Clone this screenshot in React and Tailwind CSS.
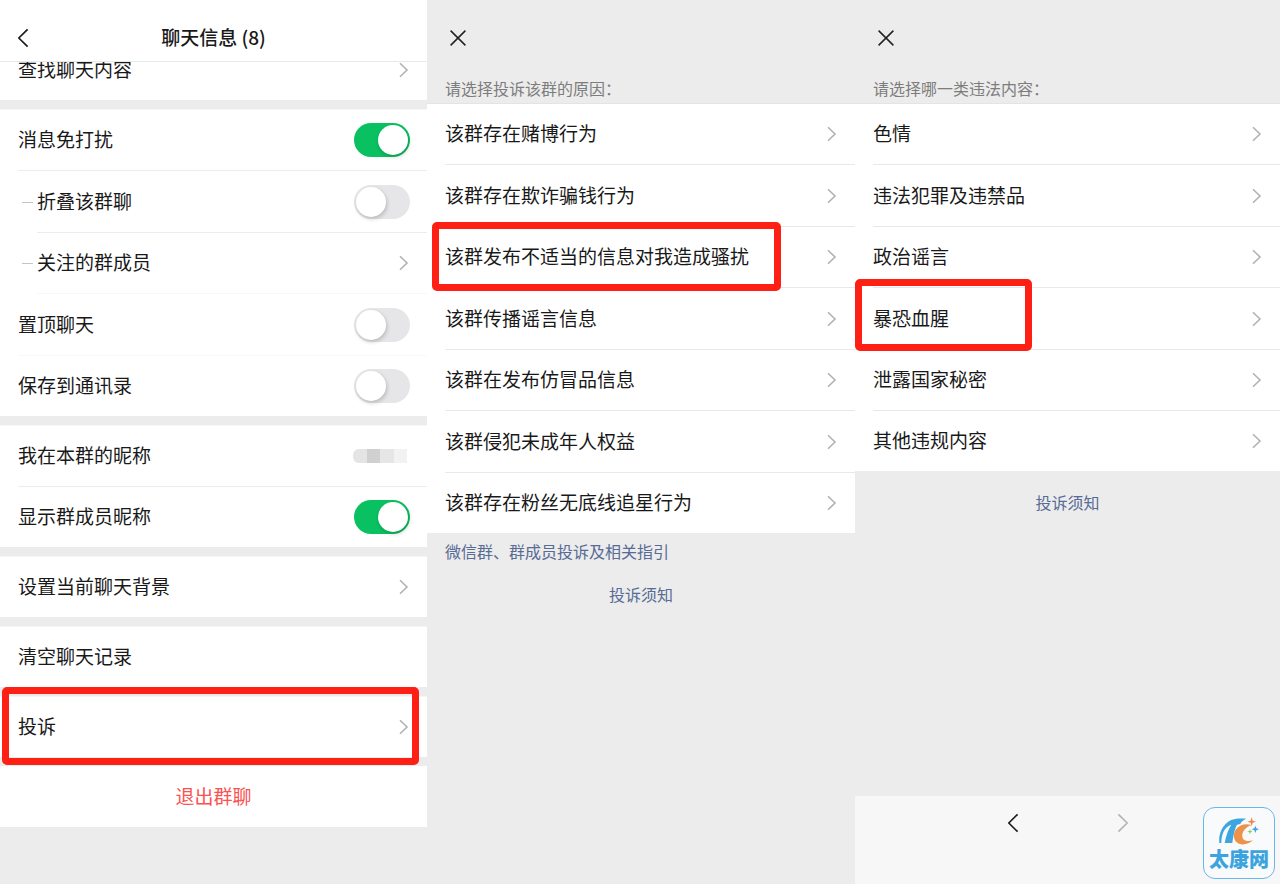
import React from "react";

function Chevron({ className = "text-[#b2b2b2]" }) {
  return (
    <svg viewBox="0 0 12 16" fill="none" stroke="currentColor" strokeWidth="1.6" className={`h-4 w-3 shrink-0 ${className}`} aria-hidden="true">
      <path d="M2 1.2 9 8l-7 6.8" />
    </svg>
  );
}

function NavArrow({ flip, className }) {
  return (
    <svg viewBox="0 0 12 20" fill="none" stroke="currentColor" strokeWidth="1.7" strokeLinejoin="round" className={`h-5 w-3 ${className}`} aria-hidden="true">
      <path d={flip ? "M1.4 1.3 10.2 10l-8.8 8.7" : "M10.6 1.3 1.8 10l8.8 8.7"} />
    </svg>
  );
}

function Highlight({ className }) {
  return <span aria-hidden="true" className={`pointer-events-none absolute z-10 rounded-[5px] border-[7px] border-[#ff2015] ${className}`} />;
}

function Row({ sub, line, highlight, children }) {
  return (
    <li className="relative flex h-[61px] items-center pl-[18px] not-last:even:h-[62px] last:h-[60px]">
      {sub && <span className="mx-1 h-px w-[11px] shrink-0 bg-[#c4c4c4]" />}
      <div className={`flex h-full min-w-0 flex-1 border-b ${line ? line : "border-transparent"}`}>{children}</div>
      {highlight && <Highlight className={highlight} />}
    </li>
  );
}

function LinkRow({ label, ...rest }) {
  return (
    <Row {...rest}>
      <button type="button" className="flex flex-1 items-center justify-between pr-[17px] text-left">
        <span className="pb-[2px]">{label}</span>
        <Chevron />
      </button>
    </Row>
  );
}

function ToggleRow({ label, on, ...rest }) {
  return (
    <Row {...rest}>
      <label className="flex flex-1 items-center justify-between pr-[17px]">
        <span className="pb-[2px]">{label}</span>
        <input
          type="checkbox"
          role="switch"
          defaultChecked={on}
          className="flex h-[34px] w-14 shrink-0 appearance-none items-center rounded-full bg-[#e6e6e9] px-[2px] before:size-[30px] before:rounded-full before:bg-white before:shadow-[1px_2px_4px_rgba(0,0,0,0.2)] checked:justify-end checked:bg-[#09c160]"
        />
      </label>
    </Row>
  );
}

function Group({ children }) {
  return <ul className="border-t border-[#f6f6f6] bg-white">{children}</ul>;
}

function ChatInfo() {
  const line = "border-[#ececec]";
  const faint = "border-[#f8f8f8]";
  return (
    <section className="flex flex-col">
      <header className="relative z-10 grid h-[62px] grid-cols-[1fr_auto_1fr] items-center border-b border-[#e9e9e9] bg-white px-[17px] pt-[14px]">
        <button type="button" aria-label="返回" className="w-3">
          <NavArrow className="text-[#1a1a1a]" />
        </button>
        <h1 className="pb-[2px] font-medium">聊天信息 (8)</h1>
      </header>
      <div className="-mt-[23px] flex flex-col gap-[9px]">
        <Group>
          <LinkRow label="查找聊天内容" />
        </Group>
        <Group>
          <ToggleRow label="消息免打扰" on line={line} />
          <ToggleRow label="折叠该群聊" sub line={line} />
          <LinkRow label="关注的群成员" sub line={faint} />
          <ToggleRow label="置顶聊天" line={faint} />
          <ToggleRow label="保存到通讯录" />
        </Group>
        <Group>
          <Row line={line}>
            <button type="button" className="flex flex-1 items-center justify-between pr-5 text-left">
              <span className="pb-[2px]">我在本群的昵称</span>
              <span className="flex h-[14px] w-[54px] overflow-hidden rounded-l-md">
                <span className="flex-1 bg-[#e4e4e4]" />
                <span className="flex-1 bg-[#d0d0d0]" />
                <span className="flex-1 bg-[#e6e6e6]" />
                <span className="flex-1 bg-[#f2f2f2]" />
              </span>
            </button>
          </Row>
          <ToggleRow label="显示群成员昵称" on />
        </Group>
        <Group>
          <LinkRow label="设置当前聊天背景" />
        </Group>
        <Group>
          <Row>
            <button type="button" className="flex flex-1 items-center text-left">
              <span className="pb-[2px]">清空聊天记录</span>
            </button>
          </Row>
        </Group>
        <Group>
          <LinkRow label="投诉" highlight="-top-[10px] -bottom-2 left-[2px] right-2" />
        </Group>
        <div className="bg-white">
          <button type="button" className="h-[61px] w-full pb-[2px] text-[#fa5151]">退出群聊</button>
        </div>
      </div>
    </section>
  );
}

function ReportPage({ prompt, options, marked, highlight, children }) {
  return (
    <section className="flex flex-col">
      <header className="flex h-[61px] items-center px-[23px] pt-[14px]">
        <button type="button" aria-label="关闭">
          <svg viewBox="0 0 16 16" fill="none" stroke="#222" strokeWidth="1.5" className="size-4" aria-hidden="true">
            <path d="M.6.6 15.4 15.4M15.4.6.6 15.4" />
          </svg>
        </button>
      </header>
      <h2 className="flex h-[42px] items-center px-[18px] pt-3 text-base leading-5 text-[#7d7d7d]">{prompt}</h2>
      <ul className="border-t border-[#e4e4e4] bg-white">
        {options.map((label, i) => (
          <LinkRow
            key={label}
            label={label}
            line={i < options.length - 1 ? "border-[#e8e8e8]" : undefined}
            highlight={i === marked ? highlight : undefined}
          />
        ))}
      </ul>
      {children}
    </section>
  );
}

function SiteBadge() {
  return (
    <div className="absolute right-[5px] bottom-[5px] flex size-18 flex-col items-center rounded-xl border border-[#68b7e6] bg-[#f8fafb] pt-2">
      <svg viewBox="84 58 126 90" className="h-[30px] w-[42px] shrink-0" aria-hidden="true">
        <path fill="#3da5df" d="M88 139C85 110 98 84 122 71c14-7 30-6 47-5-9 4-15 8-18 16l-10 2c-7 12-11 33-14 55h-23c4-21 10-40 20-55-20 6-30 28-30 55z" />
        <path fill="#ee924a" d="M185 86c-14-7-37-3-47 12-10 14-8 34 5 41 13 8 32 5 46-8-15 4-30 2-32-11-2-15 12-31 28-34z" />
        <path fill="#f08449" d="m185 61 3 11 10 3-10 3-3 11-3-11-10-3 10-3z" />
        <path fill="#3da5df" d="m196 87 3 8 8 3-8 3-3 8-3-8-8-3 8-3z" />
        <path fill="#86c850" d="m180 97 2 6 6 2-6 2-2 6-2-6-6-2 6-2z" />
      </svg>
      <span className="text-xl leading-[26px] font-black whitespace-nowrap text-[#3ba4df]">太康网</span>
    </div>
  );
}

const reasons = [
  "该群存在赌博行为",
  "该群存在欺诈骗钱行为",
  "该群发布不适当的信息对我造成骚扰",
  "该群传播谣言信息",
  "该群在发布仿冒品信息",
  "该群侵犯未成年人权益",
  "该群存在粉丝无底线追星行为",
];

const categories = ["色情", "违法犯罪及违禁品", "政治谣言", "暴恐血腥", "泄露国家秘密", "其他违规内容"];

export default function App() {
  return (
    <main className="relative grid min-h-screen grid-cols-[427fr_428fr_425fr] bg-[#ececec] font-['Noto_Sans_CJK_SC',sans-serif] text-[19px] leading-7 text-[#191919]">
      <ChatInfo />
      <ReportPage
        prompt="请选择投诉该群的原因："
        options={reasons}
        marked={2}
        highlight="-top-[5px] -bottom-[3px] left-[5px] w-[349px]"
      >
        <div className="flex flex-col gap-[22px] px-[18px] pt-2 text-base leading-[21px] text-[#576b95]">
          <a href="#guide">微信群、群成员投诉及相关指引</a>
          <a href="#notice" className="self-center">投诉须知</a>
        </div>
      </ReportPage>
      <ReportPage
        prompt="请选择哪一类违法内容："
        options={categories}
        marked={3}
        highlight="-top-[9px] -bottom-px left-0 w-[177px]"
      >
        <a href="#notice" className="mt-[21px] self-center text-base leading-[21px] text-[#576b95]">投诉须知</a>
        <nav className="mt-auto flex h-[88px] items-start justify-center gap-[98px] bg-[#f7f7f7] pt-[17px]">
          <button type="button" aria-label="后退"><NavArrow className="text-[#1a1a1a]" /></button>
          <button type="button" aria-label="前进"><NavArrow flip className="text-[#b5b5b5]" /></button>
        </nav>
      </ReportPage>
      <SiteBadge />
    </main>
  );
}
